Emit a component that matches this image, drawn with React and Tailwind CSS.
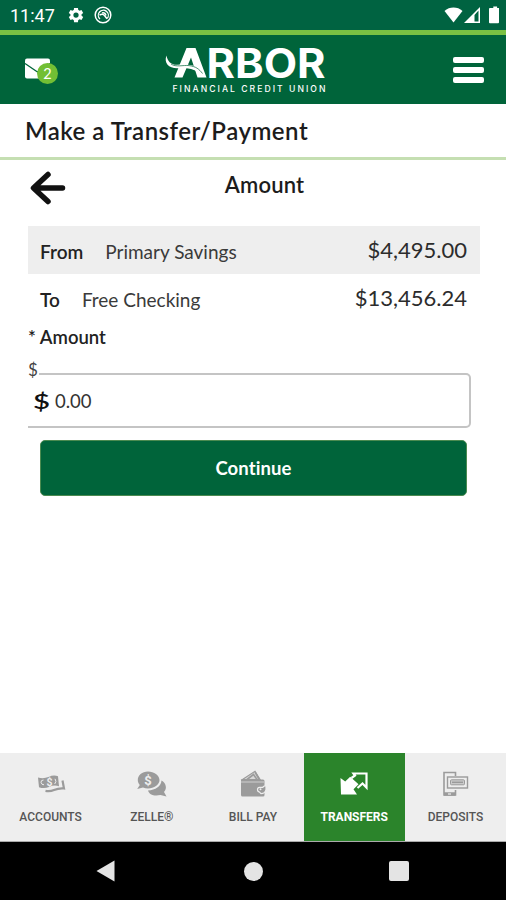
import React from "react";

const muted = "#9b9b9b";

function GearIcon() {
  return (
    <svg width="18" height="18" viewBox="0 0 24 24" fill="#fff">
      <path d="M19.4 13a7.6 7.6 0 0 0 0-2l2.2-1.7-2.3-4-2.6 1a7.600 7.600 0 0 0-1.700-1l-.4-2.800H9.400L9 5.300a7.600 7.600 0 0 0-1.700 1l-2.600-1-2.300 4L4.600 11a7.600 7.600 0 0 0 0 2l-2.200 1.700 2.300 4 2.600-1a7.600 7.600 0 0 0 1.700 1l.4 2.800h5.200l.4-2.800a7.600 7.600 0 0 0 1.700-1l2.600 1 2.300-4zM12 15.500a3.500 3.500 0 1 1 0-7 3.500 3.500 0 0 1 0 7z" />
    </svg>
  );
}

function AtCircleIcon() {
  return (
    <svg width="18" height="18" viewBox="0 0 18 18" fill="none" stroke="#fff">
      <circle cx="9" cy="9" r="7.800" strokeWidth="1.500" />
      <path d="M13.300 12.300A5 5 0 1 0 6 13" strokeWidth="1.300" />
      <path d="M5.500 9.200q3-2 5 .3l2.500 3.300" strokeWidth="1.500" />
      <path d="M8 7q3-.8 4 2.500" strokeWidth="1.500" />
    </svg>
  );
}

function StatusIcons() {
  return (
    <svg width="56" height="18" viewBox="0 0 56 18" fill="#fff">
      <path d="M.5 5C5.500.4 13.500.4 18.500 5L9.500 16.500z" />
      <path fillRule="evenodd" d="M36 1v16H20zM34.500 4.500L30.500 9v6.500h4z" />
      <path d="M47.500 2h1.800V.5h3.800V2H55v14.300q0 .9-.9.900h-8.200q-.9 0-.9-.9V2.900q0-.9.9-.9z" />
    </svg>
  );
}

function MailIcon() {
  return (
    <svg width="36" height="30" viewBox="0 0 36 30" className="block">
      <rect x="1" y="3.500" width="25" height="20" rx="2" fill="#fff" />
      <path d="M1 8.500L13.500 17 26 8.500" fill="none" stroke="#00643a" strokeWidth="1.300" />
      <circle cx="23.500" cy="18.500" r="10.500" fill="#72bf34" />
      <text x="23.500" y="23.500" textAnchor="middle" fontFamily="Lato, sans-serif" fontSize="14.500" fill="#fff">2</text>
    </svg>
  );
}

function Logo() {
  return (
    <svg width="162" height="52" viewBox="0 0 162 52" className="ml-[105px] block overflow-visible" fill="#fff">
      <path d="M9.500 33.500L21.500 4h9L41.500 33.500H32.500L26 13.500 17.500 33.500z" />
      <path d="M1.500 11.500c1 5.500 4 9.500 11 9.300 10-.8 20-1 26.500 9l-5-1C28 24.500 20 23.500 12.500 24.300 4 24.500-1.500 19 1.500 11.500z" />
      <path d="M6 20c5 3.500 12 .9 18 1.600 7 .9 10 3.400 13.500 7.900" fill="none" stroke="#00643a" strokeWidth=".7" />
      <text x="41.500" y="33.500" fontFamily="Inter, sans-serif" fontWeight="700" fontSize="40.500" textLength="119" lengthAdjust="spacingAndGlyphs">RBOR</text>
      <text x="7.500" y="48" fontFamily="Inter, sans-serif" fontWeight="500" fontSize="8.600" textLength="153">FINANCIAL CREDIT UNION</text>
    </svg>
  );
}

function AccountsIcon() {
  return (
    <svg width="32" height="30" viewBox="0 0 32 30">
      <path d="M3 8.500q5.500 1.500 10.500-.5 5-2.500 9.500-.8l1 10q-5-1.500-10 .8-5 2-10 .2z" fill={muted} />
      <path d="M27.500 11.500l1.500 8q-5-.5-10 1.500-4 1.700-8.500.8" fill="none" stroke={muted} strokeWidth="2.200" />
      <path d="M8.500 11q-2.500 0-2.500 2.300.5 2.700 3 2.500M20 9.800q2 2.700-.3 5.200" fill="none" stroke="#eee" strokeWidth="1" />
      <text x="14.500" y="16.800" textAnchor="middle" fill="#eee" fontFamily="Roboto, sans-serif" fontSize="10.500" fontWeight="700">$</text>
    </svg>
  );
}

function ZelleIcon() {
  return (
    <svg width="32" height="30" viewBox="0 0 32 30">
      <path d="M25.500 11.500c4.500 2.500 6 8 2.500 11.500l2.500 4.500-6-1.500C18 27.500 13 25.500 12 21.500 19.500 21 25 17.500 25.500 11.500z" fill={muted} />
      <path d="M12 2.500C6 2.500 1.800 6.300 1.800 11c0 2 .8 3.800 2 5L1.200 20l5.800-1.500c1.500.7 3.200 1 5 1 6 0 11.500-3.700 11.500-8.400S18 2.500 12 2.500z" fill={muted} />
      <text x="12" y="15.800" textAnchor="middle" fill="#eee" fontFamily="Roboto, sans-serif" fontSize="13" fontWeight="700">$</text>
    </svg>
  );
}

function BillPayIcon() {
  return (
    <svg width="32" height="30" viewBox="0 0 32 30">
      <path d="M5.500 10.500L18 2.300l5 8.200z" fill="#d8d8d8" stroke={muted} strokeWidth="1.200" />
      <path d="M10 10.500l6.500-5 3.500 5M18 3l4 7" fill="none" stroke={muted} strokeWidth="1.600" />
      <path d="M4 10.500h22q1.500 0 1.500 1.500v14q0 1.500-1.500 1.500H5.500Q4 27.500 4 26V10.500z" fill={muted} />
      <path d="M4 13h23" stroke="#ddd" strokeWidth=".8" />
      <path d="M29 17h-1.800l-1.500 1.300h-3.200q-2 0-2 2.300t2 2.500l1.500 1.500q4 0 5-4z" fill={muted} stroke="#eee" strokeWidth="1.200" />
      <circle cx="23.500" cy="20.300" r="1" fill="#eee" />
    </svg>
  );
}

function TransfersIcon() {
  return (
    <svg width="32" height="30" viewBox="0 0 32 30">
      <path d="M13.500 9l3.500-2.500L15.500 4.500H28.500V18.500l-4-4-5 4.500" fill="none" stroke="#fff" strokeWidth="2.200" />
      <path d="M2.500 9l4.700 3.500 5-4.700 8.300 7.500-5 5 3.500 5.200H3z" fill="#fff" />
    </svg>
  );
}

function DepositsIcon() {
  return (
    <svg width="32" height="30" viewBox="0 0 32 30" fill="none" stroke={muted}>
      <path d="M16.500 21v5H5V3.500h11.500V7" strokeWidth="1.600" />
      <path d="M5 25h11.500" strokeWidth="3.500" />
      <rect x="8.500" y="8" width="20" height="11" strokeWidth="1.400" fill="#eee" />
      <rect x="11.500" y="10.800" width="14" height="5" rx="1" strokeWidth="1" fill="#ccc" />
      <path d="M13 13.300h11" strokeWidth="1.500" />
      <path d="M9 25h3" stroke="#eee" strokeWidth="1.200" />
    </svg>
  );
}

const tabs = [
  { label: "ACCOUNTS", Icon: AccountsIcon },
  { label: "ZELLE®", Icon: ZelleIcon },
  { label: "BILL PAY", Icon: BillPayIcon },
  { label: "TRANSFERS", Icon: TransfersIcon, active: true },
  { label: "DEPOSITS", Icon: DepositsIcon },
];

function AccountRow({ label, name, amount, shaded }) {
  return (
    <div className={`flex h-12 items-center pl-3 pr-[13px] ${shaded ? "bg-[#eeeeee]" : ""}`}>
      <span className="pt-[2px] text-[19px] font-semibold text-[#222]">{label}</span>
      <span className="ml-[22px] pt-[2px] text-[19px] text-[#3a3a3a]">{name}</span>
      <span className="ml-auto text-[22px] text-[#2c2c2c]">{amount}</span>
    </div>
  );
}

export default function App() {
  return (
    <div className="flex h-[900px] w-[506px] flex-col overflow-hidden bg-white font-['Lato',sans-serif] leading-none text-[#1c1c1c]">
      <div className="flex h-[30px] shrink-0 items-center bg-[#006341] pl-[10px] pr-[6px]">
        <span className="w-[57px] pt-[2px] font-['Roboto',sans-serif] text-[18px] text-white">11:47</span>
        <GearIcon />
        <span className="ml-[9px]"><AtCircleIcon /></span>
        <span className="ml-auto"><StatusIcons /></span>
      </div>
      <header className="flex h-[74px] shrink-0 items-center border-t-[5px] border-[#7ac143] bg-[#00643a] pl-6 pr-[22px]">
        <MailIcon />
        <Logo />
        <div className="ml-auto flex w-[31px] flex-col gap-[4px]">
          <i className="h-[6px] rounded-[2px] bg-white" />
          <i className="h-[6px] rounded-[2px] bg-white" />
          <i className="h-[6px] rounded-[2px] bg-white" />
        </div>
      </header>
      <h1 className="flex h-[56px] shrink-0 items-center border-b-[3px] border-[#c5dfb2] pl-[25px] text-[24px] font-semibold tracking-[0.500px]">Make a Transfer/Payment</h1>

      <main className="flex-1 pl-[28px] pr-[26px]">
        <div className="grid h-[66px] grid-cols-[1fr_auto_1fr] items-start">
          <svg width="38" height="38" viewBox="0 0 38 38" className="mt-[9px]" fill="none" stroke="#111" strokeWidth="5.500" strokeLinecap="round" strokeLinejoin="round">
            <path d="M20 5.500L5.500 19l14.500 13.500M6 19H34.500" />
          </svg>
          <h2 className="pt-[14px] pl-[21px] text-[22px] font-semibold tracking-[0.200px]">Amount</h2>
          <span />
        </div>
        <AccountRow label="From" name="Primary Savings" amount="$4,495.00" shaded />
        <AccountRow label="To" name="Free Checking" amount="$13,456.24" />
        <div className="mt-[4px] flex h-[22px] items-center text-[18.500px] font-semibold text-[#222]">* Amount</div>
        <div className="relative mt-[25px] mr-[9px] flex h-[55px] items-center rounded-r-[5px] border-2 border-l-0 border-[#c4c4c4] pl-[5px]">
          <span className="absolute -top-[14px] left-0 bg-white pr-px text-[17px] leading-[18px] text-[#444]">$</span>
          <span className="w-[22px] origin-left scale-x-140 text-[21px] font-semibold text-[#111]">$</span>
          <span className="pt-[2px] text-[18.500px] text-[#333]">0.00</span>
        </div>
        <button className="mt-[12px] ml-[12px] block h-[56px] w-[427px] rounded-[5px] border border-[#4b8a50] bg-[#00643a] pt-px text-[18.500px] font-bold tracking-[0.100px] text-white">Continue</button>
      </main>

      <nav className="grid h-[89px] shrink-0 grid-cols-5 border-b border-[#aaa] bg-[#eeeeee]">
        {tabs.map(({ label, Icon, active }) => (
          <div key={label} className={`flex flex-col items-center pt-[16px] font-['Roboto',sans-serif] text-[12px] ${active ? "bg-[#2b842b] font-bold text-white" : "font-medium text-[#555]"}`}>
            <Icon />
            <span className="mt-[12px]">{label}</span>
          </div>
        ))}
      </nav>
      <footer className="flex h-[58px] shrink-0 items-center bg-black pl-[96px]">
        <svg width="20" height="22" viewBox="0 0 20 22"><path d="M.5 11L18.500.5v21z" fill="#e4e4e4" /></svg>
        <i className="ml-[128px] h-[19px] w-[19px] rounded-full bg-[#e4e4e4]" />
        <i className="ml-[126px] h-[20px] w-[20px] rounded-[2px] bg-[#e4e4e4]" />
      </footer>
    </div>
  );
}
